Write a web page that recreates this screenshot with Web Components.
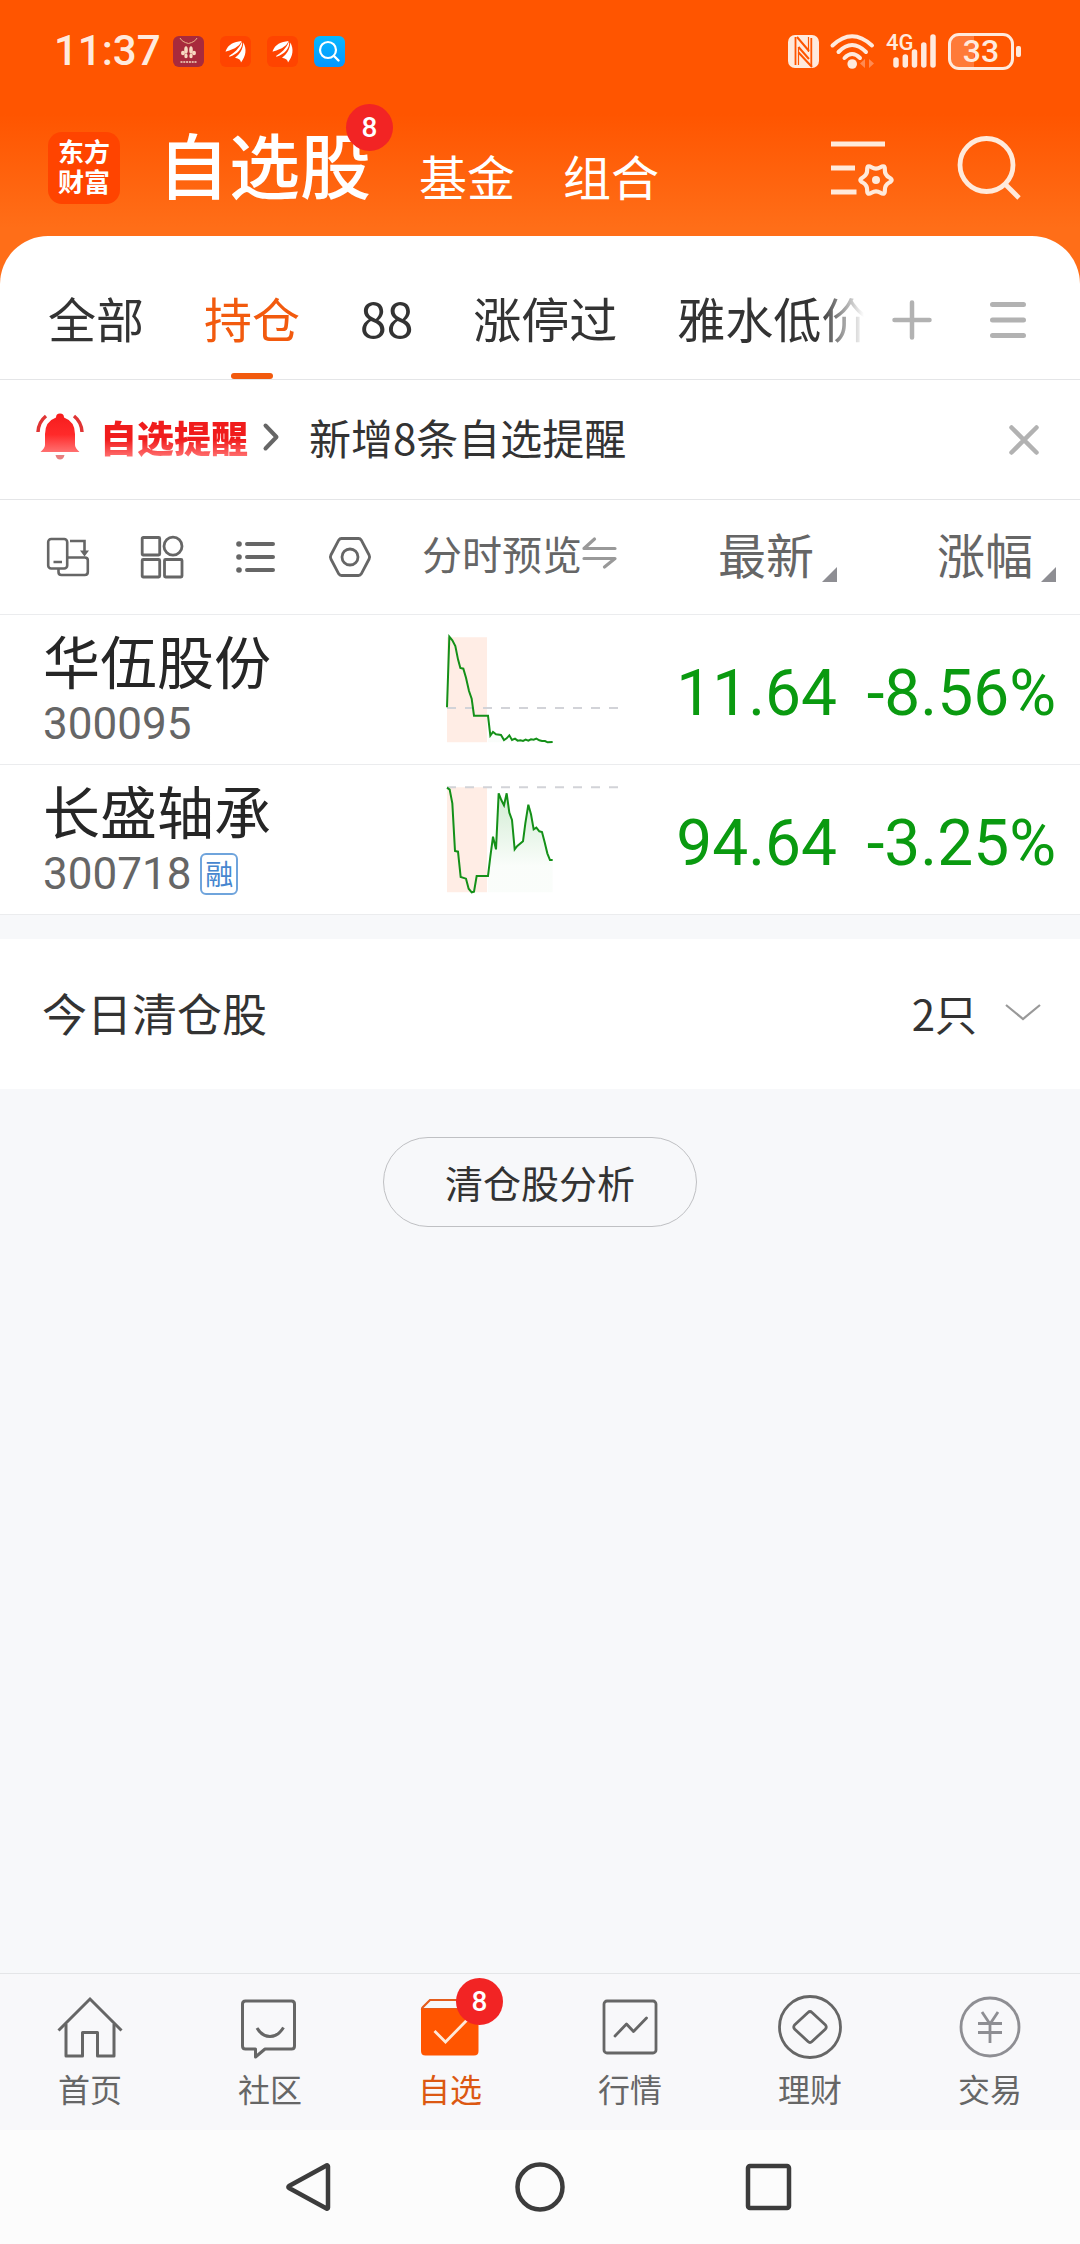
<!DOCTYPE html>
<html lang="zh-CN">
<head>
<meta charset="utf-8">
<meta name="viewport" content="width=device-width, initial-scale=1">
<title>自选股</title>
<style>
  html { background: #f7f8fa; }
  body {
    margin: 0;
    min-height: 100vh;
    display: flex;
    flex-direction: column;
    font-family: "Noto Sans CJK SC", "Noto Sans", sans-serif;
    color: #333;
    --accent: #f25a0e;
    --line: #e4e5e7;
    --muted: #666;
    --digits: Roboto, "Noto Sans CJK SC", sans-serif;
  }
  .top { background: linear-gradient(#ff5500 0, #ff5500 30%, #ff6e18 60%, #ff6e18 100%); }
  .sheet { background: #fff; border-radius: 48px 48px 0 0; }
  main { flex: 1; display: flex; flex-direction: column; }
</style>
</head>
<body>
<div class="top">
  <status-bar time="11:37" battery="33"></status-bar>
  <app-header></app-header>
  <div class="sheet"><group-tabs></group-tabs></div>
</div>
<main>
  <notice-bar label="自选提醒">新增8条自选提醒</notice-bar>
  <stock-table></stock-table>
  <cleared-summary count="2只">今日清仓股</cleared-summary>
  <pill-button>清仓股分析</pill-button>
</main>
<tab-bar>
  <tab-item icon="home">首页</tab-item>
  <tab-item icon="chat">社区</tab-item>
  <tab-item icon="box" badge="8" active>自选</tab-item>
  <tab-item icon="market">行情</tab-item>
  <tab-item icon="wealth">理财</tab-item>
  <tab-item icon="trade">交易</tab-item>
</tab-bar>
<system-nav></system-nav>

<script>
const RESET = `
  :host { display: block; box-sizing: border-box; }
  :host([hidden]) { display: none; }
  *, *::before, *::after { box-sizing: border-box; }
  button { all: unset; box-sizing: border-box; cursor: pointer; }
  a { color: inherit; text-decoration: none; }
`;

class Base extends HTMLElement {
  connectedCallback() {
    if (this.shadowRoot) return;
    this.attachShadow({ mode: "open" }).innerHTML = `<style>${RESET}${this.css()}</style>${this.html()}`;
  }
  css() { return ""; }
  html() { return "<slot></slot>"; }
}

/* name: [width, height, markup] */
const ICONS = {
  gift: [31, 31, `<rect width="31" height="31" rx="6" fill="#a82a3c"/><path d="M7 2q2 4 8.500 5.500Q22 6 24 2" stroke="#e8b58c" stroke-width="1" fill="none"/><g fill="#f7d9c0"><ellipse cx="13" cy="14" rx="1.800" ry="3.800"/><ellipse cx="18" cy="14" rx="1.800" ry="3.800"/><ellipse cx="10" cy="17" rx="2" ry="2.200"/><ellipse cx="21" cy="17" rx="2" ry="2.200"/><ellipse cx="13" cy="20" rx="1.700" ry="2.200"/><ellipse cx="18" cy="20" rx="1.700" ry="2.200"/></g><path d="M15.500 10v13" stroke="#a82a3c"/><path d="M7.500 26h16" stroke="#e0b0a0" stroke-width="2" stroke-dasharray="2 .8"/>`],
  wing: [31, 31, `<rect width="31" height="31" rx="6" fill="#ff4400"/><g fill="#fff"><path d="M5.500 15.500C8 8 14 6 21.500 5c-1 4-6 8-15.500 10.500z"/><path d="M9 20c5-3 10-7 13-14.500C23.500 12 17 18.500 9.500 20.800z"/><path d="M15 21.800C20 18 23 13 23.300 6.500 27 13 26 20 21 26.500c0-2-2-4-6-4.700z"/></g>`],
  find: [31, 31, `<defs><linearGradient id="g" x2="0" y2="1"><stop stop-color="#08b8ff"/><stop offset="1" stop-color="#0596ff"/></linearGradient></defs><rect width="31" height="31" rx="6" fill="url(#g)"/><circle cx="14" cy="14" r="8" fill="none" stroke="#fff" stroke-width="2.200"/><path d="M20 20l4.500 4.500" stroke="#fff" stroke-width="2.400" stroke-linecap="round"/>`],
  nfc: [31, 33, `<rect width="31" height="33" rx="7" fill="#ffeadd"/><path d="M7.500 2v28M23.300 3v28" stroke="#ff5500" stroke-width="1.800"/><path d="M9 2L21 16M10.500 12L21 24M10.500 17.500L24 32" stroke="#ff5500" stroke-width="2"/><path d="M10.500 12v18M20.500 2v15" stroke="#ff5500" stroke-width="1.200"/>`],
  wifi: [45, 36, `<g fill="none" stroke="#ffeadd" stroke-width="4" stroke-linecap="round"><path d="M2.500 12.500Q22 -6 42 12.500"/><path d="M8.500 19Q22 5 36 19"/><path d="M14.500 25Q22 17 30 25"/></g><circle cx="22.200" cy="31" r="4.800" fill="#ffeadd"/><path d="M35 26v9l-5-4.500zM39 26v9l5-4.500z" fill="#ff8a52"/>`],
  signal: [44, 34, `<g stroke="#ffeadd" stroke-width="5.500" stroke-linecap="round"><path d="M3 26v5M12.300 23v8M21.500 18v13M30.800 11v20M40 3v28"/></g>`],
  settings: [66, 60, `<g fill="none" stroke="#ffeadb" stroke-width="5"><path d="M0 8h54M0 32h24M0 56h25.500"/><path stroke-width="4.200" d="M58.300 46.500Q63 44 58.300 41.500Q53.700 39 53.850 33.700Q54 28.400 49.500 31.200Q45 34 40.500 31.200Q36 28.400 36.200 33.700Q36.300 39 31.700 41.500Q27 44 31.700 46.500Q36.300 49 36.200 54.300Q36 59.600 40.500 56.800Q45 54 49.500 56.800Q54 59.600 53.850 54.300Q53.700 49 58.300 46.500z"/></g><circle cx="45" cy="44" r="4" fill="#ffeadb"/>`],
  search: [64, 64, `<g fill="none" stroke="#ffeadb" stroke-width="4.800"><circle cx="30.500" cy="31" r="26.500"/><path d="M49 50l14 14"/></g>`],
  plus: [40, 40, `<path d="M20 2.500v35M2.500 20h35" stroke="#b2b2b2" stroke-width="4.500" stroke-linecap="round"/>`],
  menu: [36, 38, `<path d="M2.500 3.500h31M2.500 19h31M2.500 34.500h31" stroke="#b2b2b2" stroke-width="5" stroke-linecap="round"/>`],
  bell: [48, 46, `<defs><linearGradient id="b" x2="0" y2="1"><stop stop-color="#f51c1c"/><stop offset=".55" stop-color="#ff2a2a"/><stop offset="1" stop-color="#ff7070"/></linearGradient></defs><path fill="url(#b)" d="M20 3.500a4 4 0 0 1 8 0Q39 7.500 39 20v11q0 3 4.500 7H4.500Q9 34 9 31V20Q9 7.500 20 3.500z"/><path d="M19.500 41h9q-1 4.500-4.500 4.500t-4.500-4.500z" fill="#e88080"/><path d="M10 2Q2.500 8 2 18M38 2q7.500 6 8 16" fill="none" stroke="#e03434" stroke-width="3.500"/>`],
  next: [16, 28, `<path d="M2.500 2.500L13.500 14 2.500 25.500" fill="none" stroke="#666" stroke-width="4" stroke-linecap="round" stroke-linejoin="round"/>`],
  close: [30, 30, `<path d="M2.500 2.500l25 25M27.500 2.500l-25 25" stroke="#b2b2b2" stroke-width="4.500" stroke-linecap="round"/>`],
  rotate: [42, 40, `<g fill="none" stroke="#666" stroke-width="2.600"><rect x="1.200" y="2" width="19" height="29.500" rx="3"/><path d="M6.500 25h8.500M11.500 31.500V35q0 3 3 3h23.300q3 0 3-3V23.300q0-2.800-3-2.800H20.500M23 4h14.500v11"/></g><path d="M33 13.500h9l-4.500 6z" fill="#666"/>`],
  grid: [42, 42, `<g fill="none" stroke="#666" stroke-width="2.800"><rect x="1.200" y="1.500" width="17.500" height="17.500" rx="1"/><circle cx="32" cy="10.200" r="9"/><rect x="1.200" y="23.500" width="17.500" height="17.500" rx="1"/><rect x="23.500" y="23.500" width="17.500" height="17.500" rx="1"/></g>`],
  list: [40, 34, `<g fill="#666"><circle cx="3" cy="4" r="2.800"/><circle cx="3" cy="17" r="2.800"/><circle cx="3" cy="30" r="2.800"/></g><path d="M11 4h26M11 17h26M11 30h26" stroke="#666" stroke-width="4" stroke-linecap="round"/>`],
  hex: [42, 40, `<g fill="none" stroke="#666" stroke-width="2.800"><path stroke-linejoin="round" d="M12.500 1.500h17q1.800 0 2.800 1.700l7.800 14.800q1 2 0 4l-7.800 14.800q-1 1.700-2.800 1.700h-17q-1.800 0-2.800-1.700L1.900 22q-1-2 0-4L9.700 3.200q1-1.700 2.800-1.700z"/><circle cx="21" cy="20" r="8"/></g>`],
  swap: [35, 32, `<path d="M33 11.500H2l10.500-9.500M2 21.500h31L22.500 30" fill="none" stroke="#999" stroke-width="3.200" stroke-linecap="round" stroke-linejoin="round"/>`],
  corner: [15, 15, `<path d="M15 0v15H0z" fill="#8e8e93"/>`],
  down: [36, 18, `<path d="M1 2l17 14L35 2" fill="none" stroke="#999" stroke-width="2.200"/>`],
  home: [66, 64, `<g fill="none" stroke="#666" stroke-width="3"><path d="M1.500 35.500L33 4l31.500 31.500"/><path stroke-linejoin="round" d="M9 29v32h16.500V37.500h15V61H57V29"/></g>`],
  chat: [66, 64, `<g fill="none" stroke="#666" stroke-width="3" stroke-linejoin="round"><path d="M8.500 6h46q3 0 3 3v42q0 3-3 3H28l-9.500 8v-8h-10q-3 0-3-3V9q0-3 3-3z"/><path d="M20 33q5 8.500 13 8.500T46.500 32.500"/></g>`],
  box: [66, 64, `<path d="M5 14q0-1 1-2l7-7h46v9z" fill="#f7f8fa" stroke="#e45c1c" stroke-width="2.200"/><path d="M4 14h57.500v42q0 4.500-4.500 4.500H8.500Q4 60.500 4 56z" fill="#ff5500"/><path d="M17.500 36l11 11L50 25" fill="none" stroke="#ffe8d8" stroke-width="2.800"/>`],
  market: [66, 64, `<g fill="none" stroke="#666" stroke-width="2.800"><rect x="7" y="6" width="52" height="52" rx="3"/><path stroke-linecap="round" stroke-linejoin="round" d="M18 41l11.500-12 7 7.500L49.500 23"/></g>`],
  wealth: [66, 64, `<g fill="none" stroke="#666" stroke-width="2.800"><circle cx="33" cy="32" r="30.500"/><path stroke-linejoin="round" d="M31 17.500q2-2 4 0L48.500 30q1.500 2 0 4L35 46.500q-2 2-4 0L17.500 34q-1.500-2 0-4z"/></g>`],
  trade: [66, 64, `<g fill="none" stroke="#8e8e93" stroke-width="2.800"><circle cx="33" cy="32" r="29"/><path d="M25 17l8 12 8-12M33 28v20M21 28.500h24M21 37.500h24"/></g>`],
  back: [50, 50, `<path d="M43.500 3.500q1.500-.5 1.500 1v41q0 1.500-1.500 1L6 26q-1-1 0-2z" fill="none" stroke="#3c3c3c" stroke-width="4.500" stroke-linejoin="round"/>`],
  circle: [50, 50, `<circle cx="25" cy="25" r="22.500" fill="none" stroke="#3c3c3c" stroke-width="4.500"/>`],
  square: [50, 50, `<rect x="1" y="4" width="41" height="42" rx="2" fill="none" stroke="#3c3c3c" stroke-width="4.500"/>`]
};

class AppIcon extends Base {
  css() { return `:host { display: inline-block; flex: none; line-height: 0; } svg { display: block; overflow: visible; }`; }
  html() {
    const [w, h, body] = ICONS[this.getAttribute("name")];
    return `<svg width="${w}" height="${h}" viewBox="0 0 ${w} ${h}" aria-hidden="true">${body}</svg>`;
  }
}

class CountBadge extends Base {
  css() { return `:host { display: block; width: 47px; height: 47px; border-radius: 50%; background: #f22424;
    color: #fff; font: 500 28px/47px var(--digits); text-align: center; }`; }
}

class StatusBar extends Base {
  css() { return `
    :host { display: flex; justify-content: space-between; align-items: center; height: 84px; padding: 18px 59px 0 54px; color: #ffeadd; }
    div { display: flex; align-items: center; }
    .left { gap: 16px; }
    time { font: 500 42px/56px var(--digits); margin-right: -4px; }
    .right { gap: 11px; }
    .net { position: relative; padding-left: 7px; }
    .net span { position: absolute; left: 0; top: -1px; font: 500 22px/20px var(--digits); }
    .cell { border: 3px solid #ffeadd; border-radius: 11px; width: 66px; height: 37px; justify-content: center;
      font: 500 32px/32px var(--digits); background: linear-gradient(90deg, #ff7a38 38%, transparent 38%); }
    .cell + i { width: 5px; height: 11px; border-radius: 2px; background: #ffeadd; margin-left: 2px; }`; }
  html() { return `
    <div class="left"><time>${this.getAttribute("time")}</time><app-icon name="gift"></app-icon><app-icon name="wing"></app-icon><app-icon name="wing"></app-icon><app-icon name="find"></app-icon></div>
    <div class="right"><app-icon name="nfc"></app-icon><app-icon name="wifi"></app-icon>
      <div class="net"><app-icon name="signal"></app-icon><span>4G</span></div>
      <div><div class="cell">${this.getAttribute("battery")}</div><i></i></div></div>`; }
}

class AppHeader extends Base {
  css() { return `
    :host { display: flex; align-items: center; height: 152px; padding: 16px 60px 0 48px; color: #fff; }
    .logo { width: 72px; height: 72px; border-radius: 14px; background: #ff4400; font-size: 26px; font-weight: 700; line-height: 30px;
      padding-top: 4px; text-align: center; }
    nav { flex: 1; display: flex; align-items: flex-end; gap: 48px; padding: 0 0 12px 38px; font-size: 48px; line-height: 62px; }
    .main { position: relative; font-size: 71px; font-weight: 500; line-height: 88px; }
    count-badge { position: absolute; right: -22px; top: -14px; }
    .tools { display: flex; align-items: center; gap: 59px; }
    button { display: block; }`; }
  html() { return `
    <a class="logo" href="#">东方<br>财富</a>
    <nav><button class="main" aria-current="page">自选股<count-badge>8</count-badge></button><button>基金</button><button>组合</button></nav>
    <div class="tools"><button aria-label="管理"><app-icon name="settings"></app-icon></button><button aria-label="搜索"><app-icon name="search"></app-icon></button></div>`; }
}

class GroupTabs extends Base {
  css() { return `
    :host { display: flex; height: 144px; border-bottom: 1px solid var(--line); padding-right: 24px; }
    nav { flex: 1; min-width: 0; display: flex; gap: 60px; padding-left: 48px; overflow: hidden; white-space: nowrap; font-size: 48px;
      mask-image: linear-gradient(90deg, #000 calc(100% - 44px), transparent); }
    nav button { flex: none; position: relative; display: flex; align-items: center; padding-top: 18px; }
    [aria-selected=true] { color: var(--accent); }
    [aria-selected=true]::after { content: ""; position: absolute; left: 50%; bottom: 0; width: 42px; height: 6px; margin-left: -21px;
      border-radius: 3px; background: var(--accent); }
    .act { flex: none; width: 96px; display: flex; align-items: center; justify-content: center; padding-top: 24px; }`; }
  html() {
    const tabs = ["全部", "持仓", "88", "涨停过", "雅水低价"];
    return `<nav role="tablist">${tabs.map((t, i) => `<button role="tab" aria-selected="${i === 1}">${t}</button>`).join("")}</nav>
      <button class="act" aria-label="添加"><app-icon name="plus"></app-icon></button>
      <button class="act" aria-label="菜单"><app-icon name="menu"></app-icon></button>`;
  }
}

class NoticeBar extends Base {
  css() { return `
    :host { display: flex; height: 120px; padding: 0 26px 0 36px; background: #fff; border-bottom: 1px solid var(--line); }
    a { flex: 1; display: flex; align-items: center; padding-bottom: 6px; }
    b { margin: 0 15px 0 16px; font-size: 37px; font-weight: 900; line-height: 48px; color: transparent;
      background: linear-gradient(#f01c1c 55%, #ff6c6c 90%); -webkit-background-clip: text; background-clip: text; }
    .msg { margin-left: 30px; font-size: 42px; }
    button { width: 60px; display: flex; align-items: center; justify-content: center; }`; }
  html() { return `<a href="#"><app-icon name="bell"></app-icon><b>${this.getAttribute("label")}</b><app-icon name="next"></app-icon><span class="msg"><slot></slot></span></a>
    <button aria-label="关闭"><app-icon name="close"></app-icon></button>`; }
}

/* Intraday preview; points share a 528 x 447 grid, "base" is the previous close. */
class SparkLine extends Base {
  css() { return `svg { display: block; }`; }
  html() {
    const pts = this.getAttribute("points"), base = this.getAttribute("base");
    return `<svg width="176" height="149" viewBox="78 15 528 447" role="img" aria-label="分时走势">
      <defs><linearGradient id="f" x2="0" y2="1"><stop stop-color="#0c9a14" stop-opacity=".2"/><stop offset=".75" stop-color="#0c9a14" stop-opacity=".02"/></linearGradient>
      <clipPath id="c"><path d="M204 0H600V460H204z"/></clipPath></defs>
      <path d="M81 82h120v315H81z" fill="#ffede5"/>
      <path d="M81 ${base}h513" stroke="#d2d3d8" stroke-width="6" stroke-dasharray="27 27"/>
      <polygon points="81,397 ${pts} 398,397" fill="url(#f)" clip-path="url(#c)"/>
      <polyline points="${pts}" fill="none" stroke="#149018" stroke-width="6"/></svg>`;
  }
}

const STOCKS = [
  { name: "华伍股份", code: "300095", price: "11.64", change: "-8.56%", base: 294,
    points: "81,292 88,80 97,91 106,108 114,148 121,174 130,176 138,203 147,243 155,266 162,317 204,317 211,377 219,366 228,373 243,375 252,390 260,385 268,376 276,390 285,386 293,392 301,391 309,393 317,389 325,392 333,388 341,389 349,386 358,391 366,393 375,393 383,397 398,396" },
  { name: "长盛轴承", code: "300718", tag: "融", price: "94.64", change: "-3.25%", base: 82,
    points: "81,83 89,89 97,130 105,273 114,275 122,351 138,356 146,386 155,397 162,395 170,348 204,348 211,290 219,230 228,268 236,100 244,120 252,136 260,100 268,158 276,180 284,268 292,258 309,244 316,190 325,134 333,163 341,208 349,203 358,214 366,216 374,247 382,280 390,300 398,300" }
];

class StockTable extends Base {
  css() { return `
    :host { background: #fff; }
    table { width: 100%; table-layout: fixed; border-collapse: separate; border-spacing: 0; }
    .c2 { width: 200px; } .c3 { width: 215px; } .c4 { width: 243px; }
    th, td { padding: 0; font-weight: 400; text-align: left; border-bottom: 1px solid #ebecee; }
    th { height: 115px; color: var(--muted); }
    td { height: 150px; }
    .tools { display: flex; padding-left: 21px; }
    .tools button { width: 94px; height: 94px; display: flex; align-items: center; justify-content: center; }
    .mode, .sort { display: flex; padding-bottom: 8px; line-height: 58px; white-space: nowrap; }
    .mode { font-size: 40px; align-items: center; }
    .sort { width: 100%; font-size: 48px; align-items: flex-end; justify-content: flex-end; gap: 8px; }
    .c4cell { padding-right: 24px; }
    .name { padding-left: 43px; font-size: 57px; line-height: 68px; color: #262626; }
    .code { display: flex; align-items: center; gap: 9px; padding-left: 43px; font: 400 44px/62px var(--digits); color: var(--muted); }
    .tag { width: 38px; height: 42px; border: 2px solid #6fa4dc; border-radius: 6px; color: #4686cf;
      font: 400 28px/36px "Noto Sans CJK SC", sans-serif; text-align: center; }
    spark-line { padding-left: 24px; }
    .num { font: 400 64px/75px var(--digits); color: #0a9a10; text-align: right; padding-top: 7px; white-space: nowrap; }`; }
  html() {
    const tools = [["rotate", "横屏"], ["grid", "宫格"], ["list", "列表"], ["hex", "设置"]];
    return `<table><colgroup><col><col class="c2"><col class="c3"><col class="c4"></colgroup>
      <thead><tr>
        <th scope="col"><div class="tools">${tools.map(([i, l]) => `<button aria-label="${l}"><app-icon name="${i}"></app-icon></button>`).join("")}</div></th>
        <th scope="col"><button class="mode">分时预览<app-icon name="swap"></app-icon></button></th>
        <th scope="col"><button class="sort">最新<app-icon name="corner"></app-icon></button></th>
        <th scope="col" class="c4cell"><button class="sort">涨幅<app-icon name="corner"></app-icon></button></th>
      </tr></thead>
      <tbody>${STOCKS.map(s => `<tr>
        <td><div class="name">${s.name}</div><div class="code">${s.code}${s.tag ? `<span class="tag">${s.tag}</span>` : ""}</div></td>
        <td><spark-line base="${s.base}" points="${s.points}"></spark-line></td>
        <td class="num">${s.price}</td><td class="num c4cell">${s.change}</td></tr>`).join("")}</tbody></table>`;
  }
}

class ClearedSummary extends Base {
  css() { return `
    :host { margin-top: 24px; background: #fff; }
    button { display: flex; width: 100%; height: 150px; align-items: center; padding: 0 39px 4px 42px; font-size: 45px; }
    .count { margin-left: auto; margin-right: 28px; font-size: 42px; }`; }
  html() { return `<button aria-expanded="false"><slot></slot><span class="count">${this.getAttribute("count")}</span><app-icon name="down"></app-icon></button>`; }
}

class PillButton extends Base {
  css() { return `
    :host { align-self: center; margin-top: 48px; }
    button { display: block; height: 90px; padding: 0 61px; border: 1px solid #bfc0c3; border-radius: 45px; font-size: 38px; line-height: 82px; }`; }
  html() { return `<button><slot></slot></button>`; }
}

class TabBar extends Base {
  css() { return `nav { display: grid; grid-auto-flow: column; grid-auto-columns: 1fr; height: 157px; border-top: 1px solid var(--line);
    background: #f8f8fa; padding-top: 21px; }`; }
  html() { return `<nav><slot></slot></nav>`; }
}

class TabItem extends Base {
  css() { return `
    a { display: flex; flex-direction: column; align-items: center; gap: 3px; color: var(--muted); font-size: 32px; line-height: 40px; }
    :host([active]) a { color: #dc5812; }
    .icon { position: relative; }
    count-badge { position: absolute; left: 39px; top: -17px; }`; }
  html() {
    const badge = this.getAttribute("badge");
    return `<a href="#"><span class="icon"><app-icon name="${this.getAttribute("icon")}"></app-icon>${badge ? `<count-badge>${badge}</count-badge>` : ""}</span><slot></slot></a>`;
  }
}

class SystemNav extends Base {
  css() { return `:host { display: flex; justify-content: center; align-items: center; gap: 182px; height: 114px; padding-top: 4px; background: #fcfcfc; } button { display: block; }`; }
  html() { return [["back", "返回"], ["circle", "主屏幕"], ["square", "最近任务"]].map(([i, l]) => `<button aria-label="${l}"><app-icon name="${i}"></app-icon></button>`).join(""); }
}

Object.entries({
  "app-icon": AppIcon, "count-badge": CountBadge, "status-bar": StatusBar, "app-header": AppHeader, "group-tabs": GroupTabs,
  "notice-bar": NoticeBar, "spark-line": SparkLine, "stock-table": StockTable, "cleared-summary": ClearedSummary,
  "pill-button": PillButton, "tab-bar": TabBar, "tab-item": TabItem, "system-nav": SystemNav
}).forEach(([tag, cls]) => customElements.define(tag, cls));
</script>
</body>
</html>
